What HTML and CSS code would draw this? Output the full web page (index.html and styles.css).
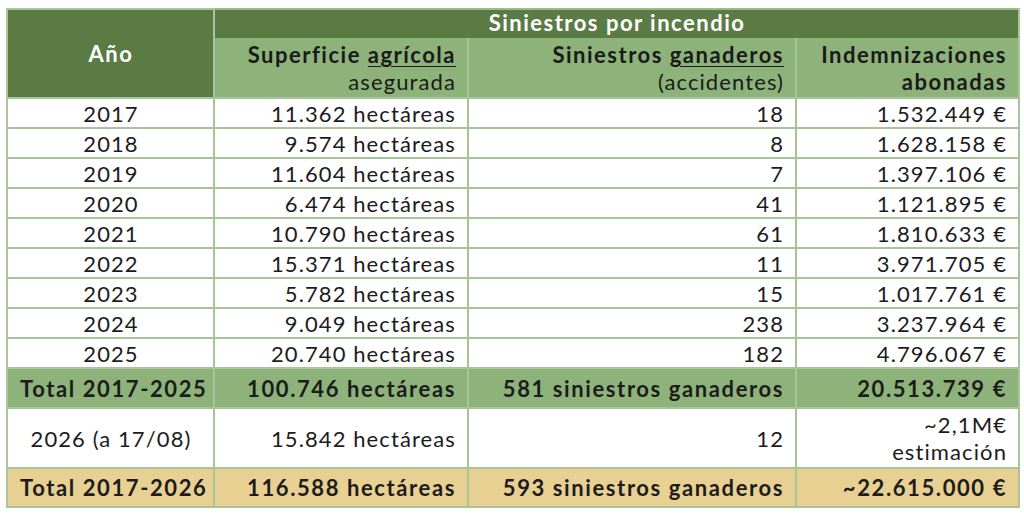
FILE: index.html
```html
<!DOCTYPE html>
<html lang="es">
<head>
<meta charset="utf-8">
<title>Siniestros por incendio</title>
<link rel="stylesheet" href="styles.css">
</head>
<body>
<div class="wrap">
<table class="tbl">
  <colgroup>
    <col class="c1"><col class="c2"><col class="c3"><col class="c4">
  </colgroup>
  <thead>
    <tr class="h1">
      <th class="year-h" rowspan="2">Año</th>
      <th class="group-h" colspan="3">Siniestros por incendio</th>
    </tr>
    <tr class="h2">
      <th class="sub"><b>Superficie <u>agrícola</u></b><br><span class="n">asegurada</span></th>
      <th class="sub"><b>Siniestros <u>ganaderos</u></b><br><span class="n">(accidentes)</span></th>
      <th class="sub"><b>Indemnizaciones<br>abonadas</b></th>
    </tr>
  </thead>
  <tbody>
    <tr class="d"><td class="y">2017</td><td>11.362 hectáreas</td><td>18</td><td>1.532.449 €</td></tr>
    <tr class="d"><td class="y">2018</td><td>9.574 hectáreas</td><td>8</td><td>1.628.158 €</td></tr>
    <tr class="d"><td class="y">2019</td><td>11.604 hectáreas</td><td>7</td><td>1.397.106 €</td></tr>
    <tr class="d"><td class="y">2020</td><td>6.474 hectáreas</td><td>41</td><td>1.121.895 €</td></tr>
    <tr class="d"><td class="y">2021</td><td>10.790 hectáreas</td><td>61</td><td>1.810.633 €</td></tr>
    <tr class="d"><td class="y">2022</td><td>15.371 hectáreas</td><td>11</td><td>3.971.705 €</td></tr>
    <tr class="d"><td class="y">2023</td><td>5.782 hectáreas</td><td>15</td><td>1.017.761 €</td></tr>
    <tr class="d"><td class="y">2024</td><td>9.049 hectáreas</td><td>238</td><td>3.237.964 €</td></tr>
    <tr class="d"><td class="y">2025</td><td>20.740 hectáreas</td><td>182</td><td>4.796.067 €</td></tr>
    <tr class="tot"><td class="y">Total 2017-2025</td><td>100.746 hectáreas</td><td>581 siniestros ganaderos</td><td>20.513.739 €</td></tr>
    <tr class="cur"><td class="y">2026 (a 17/08)</td><td>15.842 hectáreas</td><td>12</td><td>~2,1M€<br>estimación</td></tr>
    <tr class="tot2"><td class="y">Total 2017-2026</td><td>116.588 hectáreas</td><td>593 siniestros ganaderos</td><td>~22.615.000 €</td></tr>
  </tbody>
</table>
</div>
</body>
</html>
```
FILE: styles.css
```css
html, body {
  margin: 0;
  padding: 0;
  background: #ffffff;
}
.wrap {
  padding: 8px 6px;
}
.tbl {
  width: 1012px;
  table-layout: fixed;
  border-collapse: collapse;
  font-family: "Lato", "Open Sans", sans-serif;
  font-size: 22px;
  letter-spacing: 1.1px;
  color: #1c1c1c;
  border: 2px solid #9dbb8b;
}
.c1 { width: 207px; }
.c2 { width: 254px; }
.c3 { width: 328px; }
.c4 { width: 223px; }
.tbl th, .tbl td {
  border: 2px solid #a8c59a;
  padding: 0 11px 0 12px;
  text-align: right;
  vertical-align: middle;
  line-height: 27px;
  white-space: nowrap;
}
.h1 { height: 29px; }
.h2 { height: 60px; }
.year-h {
  background: #5b7b45;
  color: #ffffff;
  font-weight: 700;
  letter-spacing: 1.6px;
  text-align: center !important;
  border-color: #a8c59a;
}
.tbl th.group-h {
  background: #5b7b45;
  color: #ffffff;
  font-weight: 700;
  letter-spacing: 1.5px;
  text-align: center;
  border-bottom: 0;
  border-top: 2px solid #9dbb8b;
  padding-bottom: 3px;
  line-height: 24px;
}
.sub {
  background: #8db37a;
  color: #1a1a1a;
  font-weight: 400;
  border-top: 0 !important;
}
.sub b { font-weight: 700; letter-spacing: 1.5px; }
.sub u { text-underline-offset: 3px; text-decoration-thickness: 1px; }
.d { height: 30px; }
.tbl td.y { text-align: center; }
.tot { height: 40px; background: #8db37a; font-weight: 700; letter-spacing: 1.6px; }
.cur { height: 60px; }
.tot2 { height: 39px; background: #e8cf92; font-weight: 700; letter-spacing: 1.6px; }
```
